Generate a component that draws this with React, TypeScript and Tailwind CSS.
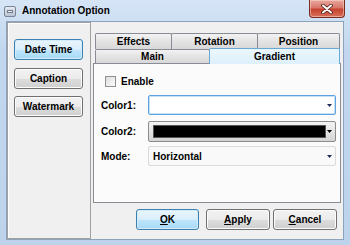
import React from "react";

const font = "font-['Liberation_Sans',Arial,sans-serif]";

function Btn({ children, primary, className = "" }: { children: React.ReactNode; primary?: boolean; className?: string }) {
  return (
    <div
      className={
        "h-[21px] rounded-[3px] border flex items-center justify-center text-[10px] font-bold text-black " +
        (primary
          ? "border-[#3c7fb1] bg-[linear-gradient(#e9f5fc_0%,#d9eefb_50%,#bee6fd_51%,#a7d9f5_100%)] shadow-[inset_0_0_0_1px_#d4ecfa] "
          : "border-[#707070] bg-[linear-gradient(#f2f2f2_0%,#ebebeb_50%,#dddddd_51%,#cfcfcf_100%)] shadow-[inset_0_0_0_1px_#fcfcfc] ") +
        className
      }
    >
      {children}
    </div>
  );
}

function Arrow({ color = "#000" }: { color?: string }) {
  return (
    <svg width="5" height="3" viewBox="0 0 5 3" className="shrink-0">
      <path d="M0 0H5L2.5 3Z" fill={color} />
    </svg>
  );
}

export default function App() {
  return (
    <div className={"w-[350px] h-[245px] flex flex-col bg-[linear-gradient(#d6e5f6,#c2d7ef_20%,#bdd3ec)] " + font}>
      {/* Title bar */}
      <div className="h-[21px] flex items-start shrink-0">
        <div className="ml-[4px] mt-[6px] w-[12px] h-[11px] rounded-[2px] border border-[#7a8595] bg-[linear-gradient(#e6ebf2,#b9c3d1)] flex items-center justify-center">
          <div className="w-[6px] h-[3px] border border-[#6d7888] bg-[#f4f6f9]" />
        </div>
        <div className="ml-[6px] mt-[4px] text-[10px] leading-[14px] font-bold text-black">Annotation Option</div>
        <div className="ml-auto mr-[5px] w-[36px] h-[18px] rounded-b-[4px] border border-t-0 border-[#7b2c22] bg-[linear-gradient(#e8a99f_0%,#d9776a_45%,#c7432f_55%,#d6705a_100%)] shadow-[inset_0_0_0_1px_rgba(255,220,210,0.5)] flex items-center justify-center">
          <svg width="12" height="10" viewBox="0 0 12 10">
            <path d="M2 1.5L10 8.5M10 1.5L2 8.5" stroke="#4a1a12" strokeWidth="3.6" strokeLinecap="round" />
            <path d="M2 1.5L10 8.5M10 1.5L2 8.5" stroke="#ffffff" strokeWidth="2" strokeLinecap="round" />
          </svg>
        </div>
      </div>

      {/* Client area */}
      <div className="mx-[6px] h-[219px] border border-[#8ea2bb] bg-[#f0f0f0] flex shrink-0">
        {/* Left panel */}
        <div className="w-[84px] h-full border border-[#a0a0a0] shadow-[inset_1px_1px_0_#ffffff] flex flex-col pl-[6px] pt-[16px] shrink-0">
          <Btn primary className="w-[69px]">Date Time</Btn>
          <Btn className="w-[69px] mt-[8px]">Caption</Btn>
          <Btn className="w-[69px] mt-[7px]">Watermark</Btn>
        </div>

        {/* Right area */}
        <div className="flex-1 flex flex-col pl-[2px] pt-[11px]">
          {/* Tabs */}
          <div className="ml-[2px] w-[245px] flex flex-col">
            <div className="flex h-[16px]">
              <div className="w-[77px] border border-b-0 border-[#898c95] rounded-t-[2px] bg-[linear-gradient(#f3f3f3,#e3e3e3_50%,#d8d8d8)] text-[10px] font-bold flex items-center justify-center">Effects</div>
              <div className="w-[87px] -ml-px border border-b-0 border-[#898c95] rounded-t-[2px] bg-[linear-gradient(#f3f3f3,#e3e3e3_50%,#d8d8d8)] text-[10px] font-bold flex items-center justify-center">Rotation</div>
              <div className="w-[83px] -ml-px border border-b-0 border-[#898c95] rounded-t-[2px] bg-[linear-gradient(#f3f3f3,#e3e3e3_50%,#d8d8d8)] text-[10px] font-bold flex items-center justify-center">Position</div>
            </div>
            <div className="flex h-[14px] items-end">
              <div className="w-[115px] h-[14px] border border-b-0 border-[#898c95] rounded-t-[2px] bg-[linear-gradient(#f3f3f3,#e3e3e3_50%,#d8d8d8)] text-[10px] font-bold flex items-center justify-center">Main</div>
              <div className="w-[131px] h-[16px] -ml-px -mb-px relative z-10 border border-b-0 border-[#6aa8d6] rounded-t-[2px] bg-[linear-gradient(#eaf6fd,#ddf0fb)] text-[10px] font-bold flex items-center justify-center pb-[1px]">Gradient</div>
            </div>
          </div>

          {/* Tab panel */}
          <div className="w-[248px] h-[140px] border border-[#898c95] bg-[#fbfbfb] flex flex-col">
            <div className="flex items-center pl-[11px] pt-[12px]">
              <div className="w-[11px] h-[11px] border border-[#8f8f8f] bg-[linear-gradient(135deg,#dcdcdc,#fbfbfb)] flex items-center justify-center">
                <div className="w-[7px] h-[7px] bg-[linear-gradient(135deg,#e0e0e0,#f8f8f8)]" />
              </div>
              <span className="ml-[5px] text-[10px] font-bold leading-[11px]">Enable</span>
            </div>

            <div className="flex items-center mt-[8px]">
              <span className="w-[54px] pl-[7px] text-[10px] font-bold">Color1:</span>
              <div className="w-[188px] h-[20px] rounded-[2px] border border-[#5ea2e2] bg-white shadow-[inset_0_0_0_1px_#c6e2f8] flex items-center justify-end pr-[3px]">
                <Arrow color="#1c2a5c" />
              </div>
            </div>

            <div className="flex items-center mt-[6px]">
              <span className="w-[54px] pl-[7px] text-[10px] font-bold">Color2:</span>
              <div className="w-[188px] h-[21px] rounded-[2px] border border-[#8c8c8c] bg-[linear-gradient(#f2f2f2,#e4e4e4_50%,#d4d4d4)] flex items-center pl-[4px] pr-[3px]">
                <div className="w-[173px] h-[13px] bg-black border border-[#555]" />
                <div className="ml-auto">
                  <Arrow />
                </div>
              </div>
            </div>

            <div className="flex items-center mt-[4px]">
              <span className="w-[54px] pl-[7px] text-[10px] font-bold">Mode:</span>
              <div className="w-[188px] h-[20px] rounded-[2px] border border-[#dadada] bg-[#f9f9f9] flex items-center pl-[4px] pr-[3px]">
                <span className="text-[10px] font-bold">Horizontal</span>
                <div className="ml-auto">
                  <Arrow color="#1c2a5c" />
                </div>
              </div>
            </div>
          </div>

          {/* Bottom buttons */}
          <div className="flex mt-[6px] pl-[43px]">
            <Btn primary className="w-[63px]"><span><span className="underline">O</span>K</span></Btn>
            <Btn className="w-[64px] ml-[7px]"><span><span className="underline">A</span>pply</span></Btn>
            <Btn className="w-[64px] ml-[3px]"><span><span className="underline">C</span>ancel</span></Btn>
          </div>
        </div>
      </div>
    </div>
  );
}
